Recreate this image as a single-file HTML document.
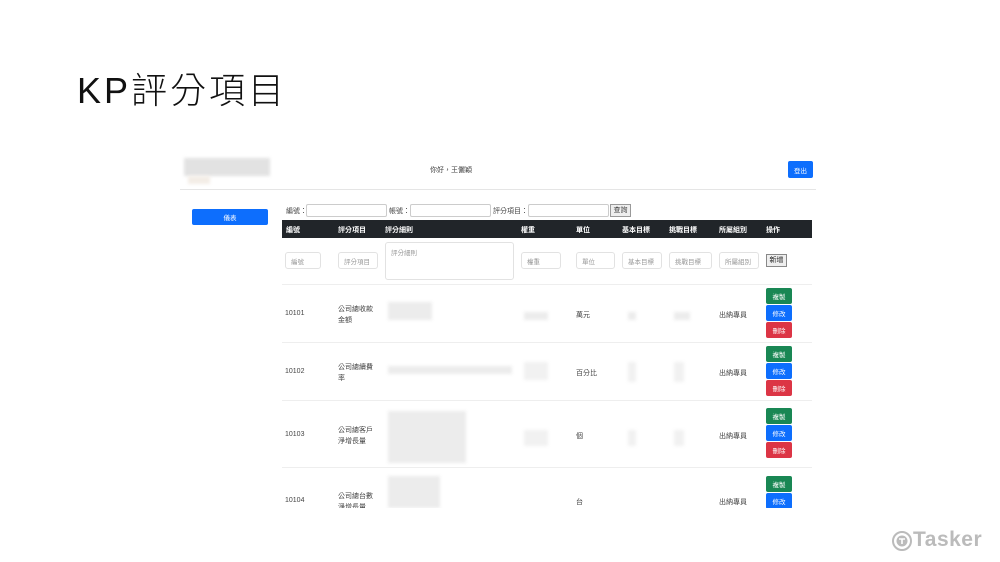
<!DOCTYPE html>
<html><head><meta charset="utf-8"><style>
*{margin:0;padding:0;box-sizing:border-box}
body{width:1000px;height:562px;background:#fff;position:relative;overflow:hidden;font-family:"Liberation Sans","Noto Sans CJK TC",sans-serif;color:#333}
.a{position:absolute}
.t{font-size:7px;color:#444;white-space:nowrap}
.in{position:absolute;border:1px solid #ccc;background:#fff;border-radius:2px}
.ph{position:absolute;border:1px solid #e2e2e2;border-radius:3px;font-size:6.5px;color:#999;padding:0 0 0 5px;display:flex;align-items:center;background:#fff}
.hd{position:absolute;top:220px;font-size:7px;color:#fff;font-weight:bold}
.btn{position:absolute;width:26px;height:16px;border-radius:2px;color:#fff;font-size:6.5px;display:flex;align-items:center;justify-content:center}
.g{background:#198754}.b{background:#0d6efd}.r{background:#dc3545}
.blur{position:absolute;background:#ececec;filter:blur(1.5px)}
.line{position:absolute;left:282px;width:530px;height:1px;background:#eee}
</style></head><body>
<div class="a" style="left:77px;top:62px;font-size:36px;color:#111;font-family:'Liberation Sans','Noto Sans CJK TC',sans-serif;font-weight:300;letter-spacing:3px">KP評分項目</div>

<div class="blur" style="left:184px;top:158px;width:86px;height:18px;background:#e2e2e2"></div>
<div class="blur" style="left:188px;top:176px;width:22px;height:8px;background:#f3ede6"></div>
<div class="a t" style="left:430px;top:165px">你好，王儷穎</div>
<div class="btn b" style="left:788px;top:161px;width:25px;height:17px">登出</div>
<div class="a" style="left:180px;top:189px;width:636px;height:1px;background:#e5e5e5"></div>

<div class="btn b" style="left:192px;top:209px;width:76px;height:16px">儀表</div>

<div class="a t" style="left:286px;top:206px">編號：</div>
<div class="in" style="left:306px;top:204px;width:81px;height:13px"></div>
<div class="a t" style="left:389px;top:206px">帳號：</div>
<div class="in" style="left:410px;top:204px;width:81px;height:13px"></div>
<div class="a t" style="left:493px;top:206px">評分項目：</div>
<div class="in" style="left:528px;top:204px;width:81px;height:13px"></div>
<div class="a t" style="left:610px;top:204px;width:21px;height:13px;border:1px solid #999;background:#eee;text-align:center;line-height:11px">查詢</div>

<div class="a" style="left:282px;top:220px;width:530px;height:18px;background:#212529"></div>
<div class="hd" style="left:286px;top:225px">編號</div>
<div class="hd" style="left:338px;top:225px">評分項目</div>
<div class="hd" style="left:385px;top:225px">評分細則</div>
<div class="hd" style="left:521px;top:225px">權重</div>
<div class="hd" style="left:576px;top:225px">單位</div>
<div class="hd" style="left:622px;top:225px">基本目標</div>
<div class="hd" style="left:669px;top:225px">挑戰目標</div>
<div class="hd" style="left:719px;top:225px">所屬組別</div>
<div class="hd" style="left:766px;top:225px">操作</div>

<div class="ph" style="left:285px;top:252px;width:36px;height:17px">編號</div>
<div class="ph" style="left:338px;top:252px;width:40px;height:17px">評分項目</div>
<div class="ph" style="left:385px;top:242px;width:129px;height:38px;align-items:flex-start;padding-top:4px">評分細則</div>
<div class="ph" style="left:521px;top:252px;width:40px;height:17px">權重</div>
<div class="ph" style="left:576px;top:252px;width:39px;height:17px">單位</div>
<div class="ph" style="left:622px;top:252px;width:40px;height:17px">基本目標</div>
<div class="ph" style="left:669px;top:252px;width:43px;height:17px">挑戰目標</div>
<div class="ph" style="left:719px;top:252px;width:40px;height:17px">所屬組別</div>
<div class="a t" style="left:766px;top:254px;width:21px;height:13px;border:1px solid #888;background:#eee;text-align:center;line-height:11px;color:#222">新增</div>
<div class="line" style="top:284px"></div>

<div class="a t" style="left:285px;top:310px">10101</div>
<div class="a t" style="left:338px;top:304px;line-height:11px">公司總收款<br>金額</div>
<div class="blur" style="left:388px;top:302px;width:44px;height:18px"></div>
<div class="blur" style="left:524px;top:312px;width:24px;height:8px"></div>
<div class="a t" style="left:576px;top:310px">萬元</div>
<div class="blur" style="left:628px;top:312px;width:8px;height:8px"></div>
<div class="blur" style="left:674px;top:312px;width:16px;height:8px"></div>
<div class="a t" style="left:719px;top:310px">出納專員</div>
<div class="btn g" style="left:766px;top:288px">複製</div>
<div class="btn b" style="left:766px;top:305px">修改</div>
<div class="btn r" style="left:766px;top:322px">刪除</div>
<div class="line" style="top:342px"></div>

<div class="a t" style="left:285px;top:368px">10102</div>
<div class="a t" style="left:338px;top:362px;line-height:11px">公司總續費<br>率</div>
<div class="blur" style="left:388px;top:366px;width:124px;height:8px"></div>
<div class="blur" style="left:524px;top:362px;width:24px;height:18px;background:#f1f1f1"></div>
<div class="a t" style="left:576px;top:368px">百分比</div>
<div class="blur" style="left:628px;top:362px;width:8px;height:20px;background:#f1f1f1"></div>
<div class="blur" style="left:674px;top:362px;width:10px;height:20px;background:#f1f1f1"></div>
<div class="a t" style="left:719px;top:368px">出納專員</div>
<div class="btn g" style="left:766px;top:346px">複製</div>
<div class="btn b" style="left:766px;top:363px">修改</div>
<div class="btn r" style="left:766px;top:380px">刪除</div>
<div class="line" style="top:400px"></div>

<div class="a t" style="left:285px;top:431px">10103</div>
<div class="a t" style="left:338px;top:425px;line-height:11px">公司總客戶<br>淨增長量</div>
<div class="blur" style="left:388px;top:411px;width:78px;height:52px"></div>
<div class="blur" style="left:524px;top:430px;width:24px;height:16px;background:#f1f1f1"></div>
<div class="a t" style="left:576px;top:431px">個</div>
<div class="blur" style="left:628px;top:430px;width:8px;height:16px;background:#f1f1f1"></div>
<div class="blur" style="left:674px;top:430px;width:10px;height:16px;background:#f1f1f1"></div>
<div class="a t" style="left:719px;top:431px">出納專員</div>
<div class="btn g" style="left:766px;top:408px">複製</div>
<div class="btn b" style="left:766px;top:425px">修改</div>
<div class="btn r" style="left:766px;top:442px">刪除</div>
<div class="line" style="top:467px"></div>

<div class="a t" style="left:285px;top:497px">10104</div>
<div class="a t" style="left:338px;top:491px;line-height:11px">公司總台數<br>淨增長量</div>
<div class="blur" style="left:388px;top:476px;width:52px;height:32px"></div>
<div class="a t" style="left:576px;top:497px">台</div>
<div class="a t" style="left:719px;top:497px">出納專員</div>
<div class="btn g" style="left:766px;top:476px">複製</div>
<div class="btn b" style="left:766px;top:493px">修改</div>
<div class="a" style="left:0;top:508px;width:1000px;height:54px;background:#fff"></div>

<svg class="a" style="left:891px;top:530px" width="22" height="22" viewBox="0 0 22 22"><circle cx="11" cy="11" r="9" fill="none" stroke="#bbb" stroke-width="2"/><circle cx="11" cy="11" r="5.5" fill="#bbb"/><path d="M8 9h6M11 9v5" stroke="#fff" stroke-width="1.6"/></svg>
<div class="a" style="left:913px;top:528px;font-size:21px;font-weight:bold;color:#bbb;letter-spacing:0.5px">Tasker</div>
</body></html>
